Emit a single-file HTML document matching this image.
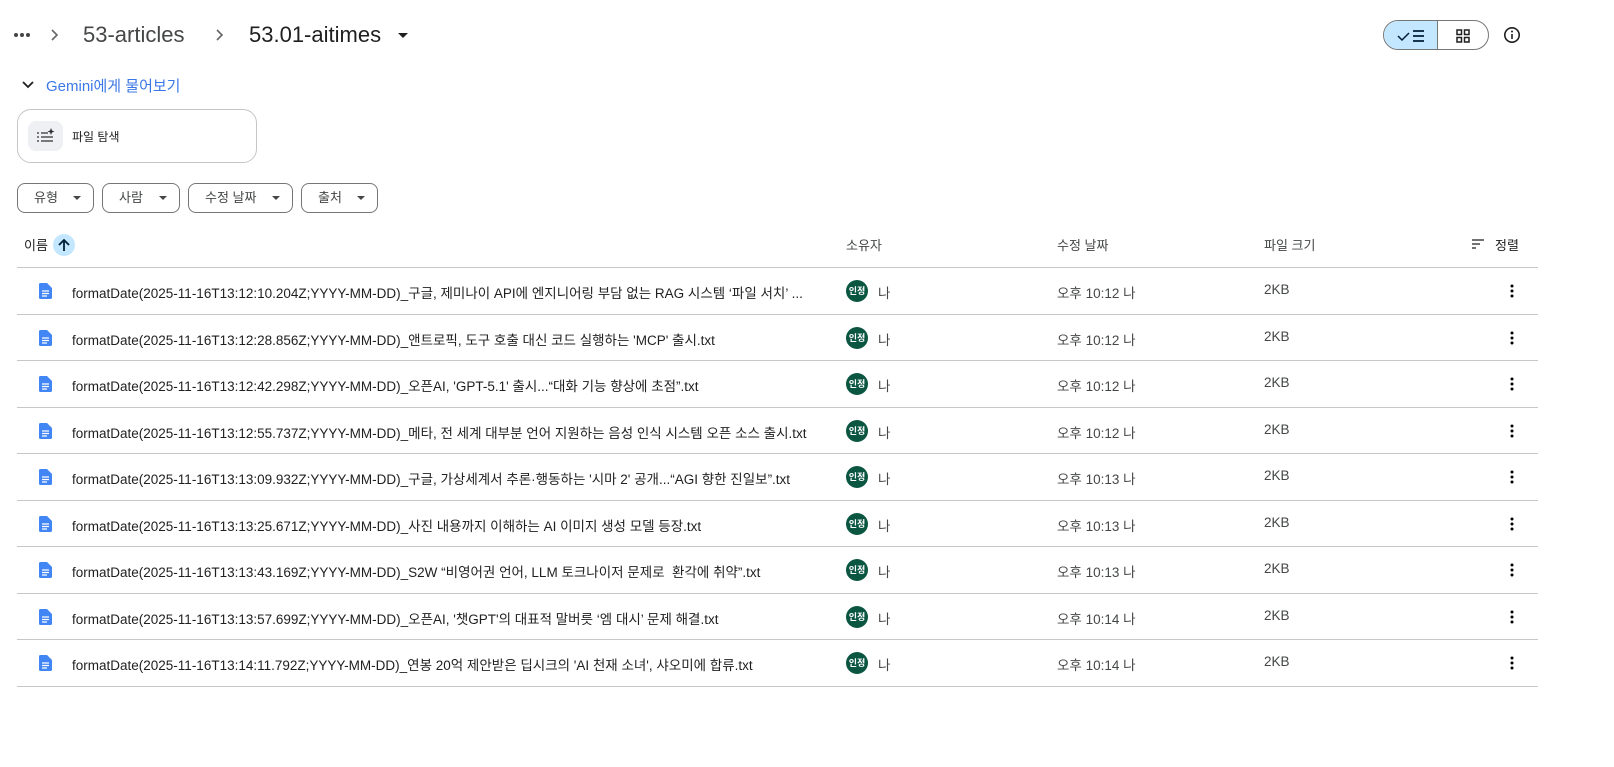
<!DOCTYPE html>
<html><head><meta charset="utf-8"><style>
*{box-sizing:border-box;margin:0;padding:0}
body{width:1614px;height:767px;background:#fff;font-family:"Liberation Sans","Noto Sans CJK KR",sans-serif;color:#1f1f1f;position:relative;overflow:hidden}
.abs{position:absolute}
.crumb{top:20px;font-size:22px;line-height:30px;color:#444746}
.chip{position:absolute;top:183px;height:30px;border:1px solid #747775;border-radius:8px;font-size:13px;line-height:28px;color:#444746;padding-left:16px}
.chip i{position:absolute;right:12px;top:12px;border-left:4px solid transparent;border-right:4px solid transparent;border-top:4px solid #444746}
.hdr{top:235px;font-size:13px;color:#444746}
.row{position:relative;width:1521px;height:46.5px;border-bottom:1px solid #c7c7c7;font-size:13.5px}
.rows{position:absolute;left:17px;top:268px}
.row .n{position:absolute;left:55px;top:14px;white-space:nowrap}
.row .doc{position:absolute;left:21px;top:15px}
.row .av{position:absolute;left:829px;top:12px;width:22px;height:22px;border-radius:50%;background:#0b5641;color:#fff;font-size:9px;font-weight:bold;text-align:center;line-height:22px}
.row .me{position:absolute;left:861px;top:14px;color:#444746}
.row .d{position:absolute;left:1040px;top:14px;color:#444746}
.row .s{position:absolute;left:1247px;top:14px;color:#444746}
.row .k{position:absolute;left:1493px;top:15px}
</style></head><body>
<div class="abs" style="left:14px;top:33px;width:4px;height:4px;border-radius:2px;background:#444;box-shadow:6px 0 #444,12px 0 #444"></div>
<svg class="abs" style="left:48px;top:27px" width="14" height="16"><path d="M4 3l5 5-5 5" fill="none" stroke="#666" stroke-width="1.6"/></svg>
<div class="abs crumb" style="left:83px">53-articles</div>
<svg class="abs" style="left:213px;top:27px" width="14" height="16"><path d="M4 3l5 5-5 5" fill="none" stroke="#666" stroke-width="1.6"/></svg>
<div class="abs crumb" style="left:249px;color:#1f1f1f">53.01-aitimes</div>
<div class="abs" style="left:398px;top:33px;border-left:5px solid transparent;border-right:5px solid transparent;border-top:5px solid #1f1f1f"></div>
<div class="abs" style="left:1383px;top:20px;width:106px;height:30px;border:1px solid #747775;border-radius:15px;overflow:hidden">
 <div style="position:absolute;left:0;top:0;width:54px;height:30px;background:#c2e7ff;border-right:1px solid #747775"></div>
 <svg style="position:absolute;left:12px;top:7px" width="30" height="16"><path d="M2 8l4 4 7-7" fill="none" stroke="#001d35" stroke-width="1.5"/><path d="M17 3h11M17 8h11M17 13h11" stroke="#001d35" stroke-width="1.8"/></svg>
 <svg style="position:absolute;left:72px;top:8px" width="14" height="14"><rect x="1" y="1" width="4.5" height="4.5" fill="none" stroke="#1f1f1f" stroke-width="1.5"/><rect x="8.5" y="1" width="4.5" height="4.5" fill="none" stroke="#1f1f1f" stroke-width="1.5"/><rect x="1" y="8.5" width="4.5" height="4.5" fill="none" stroke="#1f1f1f" stroke-width="1.5"/><rect x="8.5" y="8.5" width="4.5" height="4.5" fill="none" stroke="#1f1f1f" stroke-width="1.5"/></svg>
</div>
<svg class="abs" style="left:1503px;top:26px" width="18" height="18"><circle cx="9" cy="9" r="7.2" fill="none" stroke="#1f1f1f" stroke-width="1.6"/><path d="M9 8v5" stroke="#1f1f1f" stroke-width="1.6"/><circle cx="9" cy="5.5" r="1" fill="#1f1f1f"/></svg>
<svg class="abs" style="left:21px;top:80px" width="14" height="10"><path d="M2 2l5 5 5-5" fill="none" stroke="#1f1f1f" stroke-width="1.8"/></svg>
<div class="abs" style="left:46px;top:75px;font-size:15px;color:#3b78e7">Gemini에게 물어보기</div>
<div class="abs" style="left:17px;top:109px;width:240px;height:54px;border:1px solid #c4c7c5;border-radius:14px"></div>
<div class="abs" style="left:28px;top:121px;width:35px;height:30px;background:#eef0f3;border-radius:8px"></div>
<svg class="abs" style="left:36px;top:127px" width="20" height="18"><path d="M1 6h2M5 6h7M1 10h2M5 10h12M1 14h2M5 14h12" stroke="#333" stroke-width="1.3"/><path d="M15 1l1 2.5 2.5 1-2.5 1-1 2.5-1-2.5-2.5-1 2.5-1z" fill="#333"/></svg>
<div class="abs" style="left:72px;top:128px;font-size:12px">파일 탐색</div>
<div class="chip" style="left:17px;width:77px">유형<i></i></div>
<div class="chip" style="left:102px;width:78px">사람<i></i></div>
<div class="chip" style="left:188px;width:105px">수정 날짜<i></i></div>
<div class="chip" style="left:301px;width:77px">출처<i></i></div>
<div class="abs hdr" style="left:24px;color:#1f1f1f">이름</div>
<div class="abs" style="left:53px;top:234px;width:22px;height:22px;border-radius:50%;background:#c2e7ff"></div>
<svg class="abs" style="left:57px;top:237px" width="14" height="16"><path d="M7 14V3M2 8l5-5 5 5" fill="none" stroke="#001d35" stroke-width="1.8"/></svg>
<div class="abs hdr" style="left:846px">소유자</div>
<div class="abs hdr" style="left:1057px">수정 날짜</div>
<div class="abs hdr" style="left:1264px">파일 크기</div>
<svg class="abs" style="left:1471px;top:238px" width="14" height="12"><path d="M1 2h12M1 6h8M1 10h4" stroke="#444" stroke-width="1.5"/></svg>
<div class="abs hdr" style="left:1495px;color:#1f1f1f">정렬</div>
<div class="abs" style="left:17px;top:267px;width:1521px;height:1px;background:#c7c7c7"></div>
<div class="rows">
<div class="row"><svg class="doc" width="14" height="16"><path d="M1 1.5A1.5 1.5 0 0 1 2.5 0H9l5 5v9.5A1.5 1.5 0 0 1 12.5 16h-10A1.5 1.5 0 0 1 1 14.5z" fill="#4285f4"/><path d="M4 8h7M4 10.5h7M4 13h5" stroke="#fff" stroke-width="1.2"/></svg><div class="n">formatDate(2025-11-16T13:12:10.204Z;YYYY-MM-DD)_구글, 제미나이 API에 엔지니어링 부담 없는 RAG 시스템 ‘파일 서치’ ...</div><div class="av">인정</div><div class="me">나</div><div class="d">오후 10:12 나</div><div class="s">2KB</div><svg class="k" width="4" height="16"><circle cx="2" cy="3" r="1.5"/><circle cx="2" cy="8" r="1.5"/><circle cx="2" cy="13" r="1.5"/></svg></div>
<div class="row"><svg class="doc" width="14" height="16"><path d="M1 1.5A1.5 1.5 0 0 1 2.5 0H9l5 5v9.5A1.5 1.5 0 0 1 12.5 16h-10A1.5 1.5 0 0 1 1 14.5z" fill="#4285f4"/><path d="M4 8h7M4 10.5h7M4 13h5" stroke="#fff" stroke-width="1.2"/></svg><div class="n">formatDate(2025-11-16T13:12:28.856Z;YYYY-MM-DD)_앤트로픽, 도구 호출 대신 코드 실행하는 'MCP' 출시.txt</div><div class="av">인정</div><div class="me">나</div><div class="d">오후 10:12 나</div><div class="s">2KB</div><svg class="k" width="4" height="16"><circle cx="2" cy="3" r="1.5"/><circle cx="2" cy="8" r="1.5"/><circle cx="2" cy="13" r="1.5"/></svg></div>
<div class="row"><svg class="doc" width="14" height="16"><path d="M1 1.5A1.5 1.5 0 0 1 2.5 0H9l5 5v9.5A1.5 1.5 0 0 1 12.5 16h-10A1.5 1.5 0 0 1 1 14.5z" fill="#4285f4"/><path d="M4 8h7M4 10.5h7M4 13h5" stroke="#fff" stroke-width="1.2"/></svg><div class="n">formatDate(2025-11-16T13:12:42.298Z;YYYY-MM-DD)_오픈AI, 'GPT-5.1' 출시...“대화 기능 향상에 초점”.txt</div><div class="av">인정</div><div class="me">나</div><div class="d">오후 10:12 나</div><div class="s">2KB</div><svg class="k" width="4" height="16"><circle cx="2" cy="3" r="1.5"/><circle cx="2" cy="8" r="1.5"/><circle cx="2" cy="13" r="1.5"/></svg></div>
<div class="row"><svg class="doc" width="14" height="16"><path d="M1 1.5A1.5 1.5 0 0 1 2.5 0H9l5 5v9.5A1.5 1.5 0 0 1 12.5 16h-10A1.5 1.5 0 0 1 1 14.5z" fill="#4285f4"/><path d="M4 8h7M4 10.5h7M4 13h5" stroke="#fff" stroke-width="1.2"/></svg><div class="n">formatDate(2025-11-16T13:12:55.737Z;YYYY-MM-DD)_메타, 전 세계 대부분 언어 지원하는 음성 인식 시스템 오픈 소스 출시.txt</div><div class="av">인정</div><div class="me">나</div><div class="d">오후 10:12 나</div><div class="s">2KB</div><svg class="k" width="4" height="16"><circle cx="2" cy="3" r="1.5"/><circle cx="2" cy="8" r="1.5"/><circle cx="2" cy="13" r="1.5"/></svg></div>
<div class="row"><svg class="doc" width="14" height="16"><path d="M1 1.5A1.5 1.5 0 0 1 2.5 0H9l5 5v9.5A1.5 1.5 0 0 1 12.5 16h-10A1.5 1.5 0 0 1 1 14.5z" fill="#4285f4"/><path d="M4 8h7M4 10.5h7M4 13h5" stroke="#fff" stroke-width="1.2"/></svg><div class="n">formatDate(2025-11-16T13:13:09.932Z;YYYY-MM-DD)_구글, 가상세계서 추론·행동하는 '시마 2' 공개...“AGI 향한 진일보”.txt</div><div class="av">인정</div><div class="me">나</div><div class="d">오후 10:13 나</div><div class="s">2KB</div><svg class="k" width="4" height="16"><circle cx="2" cy="3" r="1.5"/><circle cx="2" cy="8" r="1.5"/><circle cx="2" cy="13" r="1.5"/></svg></div>
<div class="row"><svg class="doc" width="14" height="16"><path d="M1 1.5A1.5 1.5 0 0 1 2.5 0H9l5 5v9.5A1.5 1.5 0 0 1 12.5 16h-10A1.5 1.5 0 0 1 1 14.5z" fill="#4285f4"/><path d="M4 8h7M4 10.5h7M4 13h5" stroke="#fff" stroke-width="1.2"/></svg><div class="n">formatDate(2025-11-16T13:13:25.671Z;YYYY-MM-DD)_사진 내용까지 이해하는 AI 이미지 생성 모델 등장.txt</div><div class="av">인정</div><div class="me">나</div><div class="d">오후 10:13 나</div><div class="s">2KB</div><svg class="k" width="4" height="16"><circle cx="2" cy="3" r="1.5"/><circle cx="2" cy="8" r="1.5"/><circle cx="2" cy="13" r="1.5"/></svg></div>
<div class="row"><svg class="doc" width="14" height="16"><path d="M1 1.5A1.5 1.5 0 0 1 2.5 0H9l5 5v9.5A1.5 1.5 0 0 1 12.5 16h-10A1.5 1.5 0 0 1 1 14.5z" fill="#4285f4"/><path d="M4 8h7M4 10.5h7M4 13h5" stroke="#fff" stroke-width="1.2"/></svg><div class="n">formatDate(2025-11-16T13:13:43.169Z;YYYY-MM-DD)_S2W “비영어권 언어, LLM 토크나이저 문제로&nbsp; 환각에 취약”.txt</div><div class="av">인정</div><div class="me">나</div><div class="d">오후 10:13 나</div><div class="s">2KB</div><svg class="k" width="4" height="16"><circle cx="2" cy="3" r="1.5"/><circle cx="2" cy="8" r="1.5"/><circle cx="2" cy="13" r="1.5"/></svg></div>
<div class="row"><svg class="doc" width="14" height="16"><path d="M1 1.5A1.5 1.5 0 0 1 2.5 0H9l5 5v9.5A1.5 1.5 0 0 1 12.5 16h-10A1.5 1.5 0 0 1 1 14.5z" fill="#4285f4"/><path d="M4 8h7M4 10.5h7M4 13h5" stroke="#fff" stroke-width="1.2"/></svg><div class="n">formatDate(2025-11-16T13:13:57.699Z;YYYY-MM-DD)_오픈AI, '챗GPT'의 대표적 말버릇 ‘엠 대시’ 문제 해결.txt</div><div class="av">인정</div><div class="me">나</div><div class="d">오후 10:14 나</div><div class="s">2KB</div><svg class="k" width="4" height="16"><circle cx="2" cy="3" r="1.5"/><circle cx="2" cy="8" r="1.5"/><circle cx="2" cy="13" r="1.5"/></svg></div>
<div class="row"><svg class="doc" width="14" height="16"><path d="M1 1.5A1.5 1.5 0 0 1 2.5 0H9l5 5v9.5A1.5 1.5 0 0 1 12.5 16h-10A1.5 1.5 0 0 1 1 14.5z" fill="#4285f4"/><path d="M4 8h7M4 10.5h7M4 13h5" stroke="#fff" stroke-width="1.2"/></svg><div class="n">formatDate(2025-11-16T13:14:11.792Z;YYYY-MM-DD)_연봉 20억 제안받은 딥시크의 'AI 천재 소녀', 샤오미에 합류.txt</div><div class="av">인정</div><div class="me">나</div><div class="d">오후 10:14 나</div><div class="s">2KB</div><svg class="k" width="4" height="16"><circle cx="2" cy="3" r="1.5"/><circle cx="2" cy="8" r="1.5"/><circle cx="2" cy="13" r="1.5"/></svg></div>
</div>
</body></html>
